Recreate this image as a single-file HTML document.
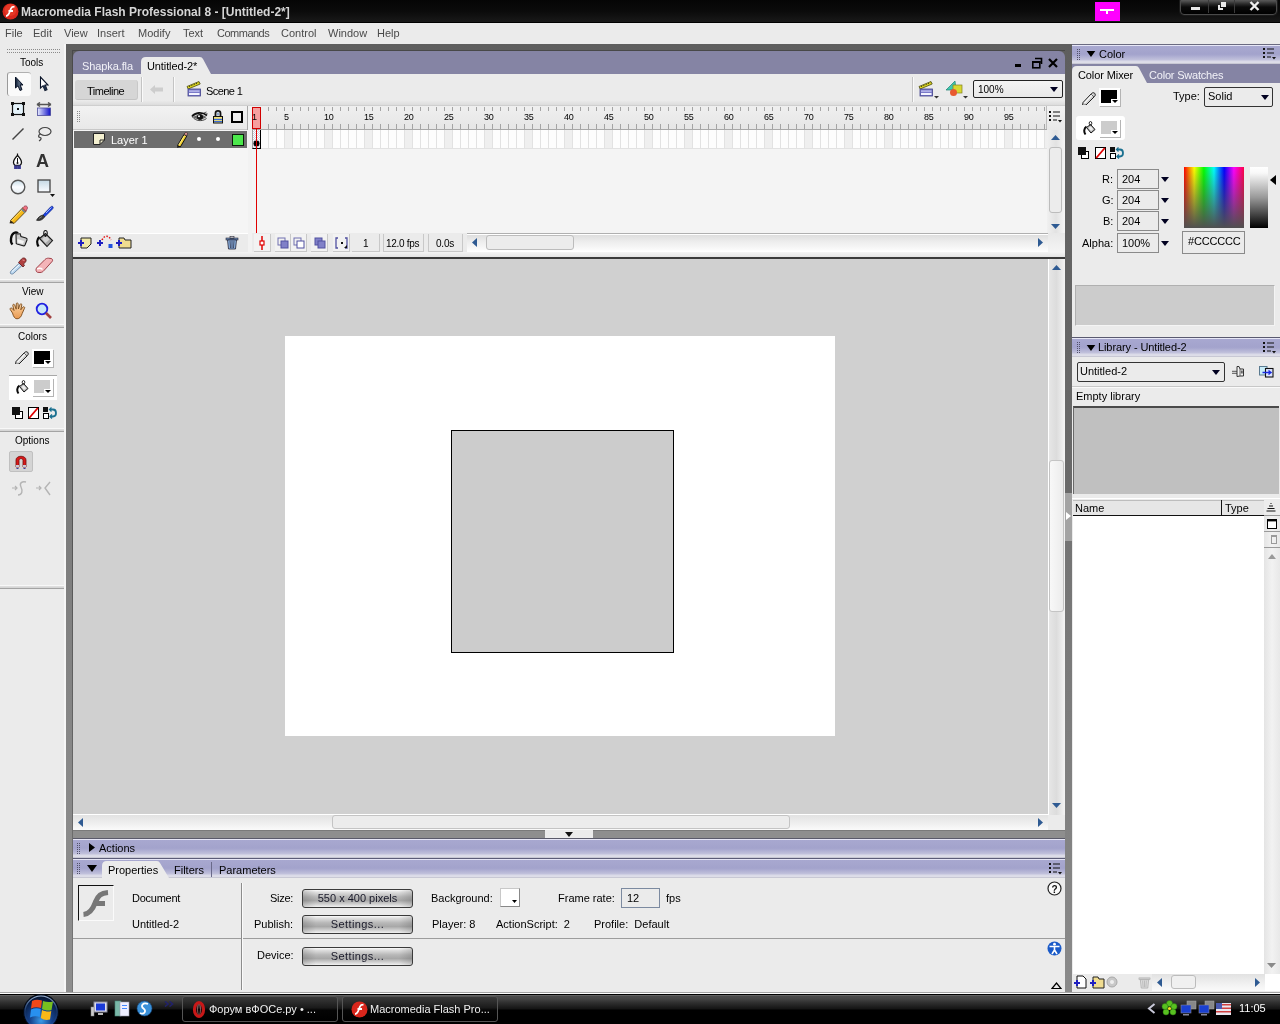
<!DOCTYPE html>
<html><head><meta charset="utf-8">
<style>
*{margin:0;padding:0;box-sizing:border-box}
html,body{width:1280px;height:1024px;overflow:hidden;will-change:transform;background:#ebebeb;font-family:"Liberation Sans",sans-serif;font-size:11px;color:#000}
div,svg{position:absolute}
.t{white-space:nowrap;line-height:1}
.hdr{background:linear-gradient(#e6e6f6 0 1px,#a8a8d0 1px,#a3a3cc 9px,#a6a6ce 10px,#c2c2dc 15px,#dadae8 16px,#dedee8 18px,#c8c8d4 18px)}
.btn{border:1px solid #3a3a3a;border-radius:3px;background:linear-gradient(90deg,rgba(0,0,0,.14),rgba(0,0,0,0) 12%,rgba(0,0,0,0) 88%,rgba(0,0,0,.14)),linear-gradient(#fcfcfc 0,#e0e0e0 12%,#b8b8b8 40%,#a8a8a8 62%,#d4d4d4 85%,#f2f2f2 100%);text-align:center;line-height:15px;color:#1a1a2a}
.fld{border:1px solid #8a8a8a;background:#ebebeb}
</style></head><body>

<!-- ================= TITLE BAR ================= -->
<div style="left:0;top:0;width:1280px;height:23px;background:linear-gradient(#050505 0,#0b0b0b 50%,#1a1a1a 100%)"></div>
<div style="left:0;top:22px;width:1280px;height:1px;background:#000"></div>
<svg style="left:2px;top:3px" width="17" height="17" viewBox="0 0 17 17"><circle cx="8.5" cy="8.5" r="8" fill="#d8261c"/><circle cx="8.5" cy="7" r="6" fill="#f04a30" opacity=".5"/><path d="M4 13 C6 13 7 11 8 8 L9 5.5 C9.6 4 10.5 3.6 12.5 3.6 M6.5 8 L11 8" stroke="#fff" stroke-width="1.8" fill="none"/></svg>
<div class="t" style="left:21px;top:6px;font-size:12px;font-weight:bold;color:#d6d6d6">Macromedia Flash Professional 8 - [Untitled-2*]</div>
<div style="left:1095px;top:2px;width:25px;height:19px;background:#ff00ff"></div>
<div style="left:1100px;top:9px;width:14px;height:2px;background:#fff"></div>
<div style="left:1106px;top:9px;width:2px;height:5px;background:#fff"></div>
<div style="left:1180px;top:-3px;width:97px;height:18px;border:1px solid #4a4a4a;border-radius:4px;background:linear-gradient(#6a6a6a 0,#505050 3px,#2a2a2a 6px,#0a0a0a 9px,#000 100%);box-shadow:0 0 0 1px #1a1a1a"></div>
<div style="left:1208px;top:0;width:1px;height:13px;background:#3a3a3a"></div>
<div style="left:1234px;top:0;width:1px;height:13px;background:#3a3a3a"></div>
<div style="left:1191px;top:7px;width:9px;height:3px;background:#e8e8e8"></div>
<div style="left:1218px;top:5px;width:5px;height:5px;border-left:2px solid #e8e8e8;border-bottom:2px solid #e8e8e8"></div>
<div style="left:1221px;top:2px;width:5px;height:5px;background:#e8e8e8"></div>
<svg style="left:1249px;top:1px" width="11" height="10" viewBox="0 0 11 10"><path d="M1.5 1 L9.5 9 M9.5 1 L1.5 9" stroke="#eee" stroke-width="2.4"/></svg>

<!-- ================= MENU BAR ================= -->
<div style="left:0;top:23px;width:1280px;height:21px;background:#ebebeb"></div>
<div class="t" style="left:5px;top:28px;font-size:11px;color:#4a4a4a;word-spacing:0">File</div>
<div class="t" style="left:33px;top:28px;font-size:11px;color:#4a4a4a">Edit</div>
<div class="t" style="left:64px;top:28px;font-size:11px;color:#4a4a4a">View</div>
<div class="t" style="left:97px;top:28px;font-size:11px;color:#4a4a4a">Insert</div>
<div class="t" style="left:138px;top:28px;font-size:11px;color:#4a4a4a">Modify</div>
<div class="t" style="left:183px;top:28px;font-size:11px;color:#4a4a4a">Text</div>
<div class="t" style="left:217px;top:28px;font-size:11px;color:#4a4a4a;letter-spacing:-.5px">Commands</div>
<div class="t" style="left:281px;top:28px;font-size:11px;color:#4a4a4a">Control</div>
<div class="t" style="left:328px;top:28px;font-size:11px;color:#4a4a4a">Window</div>
<div class="t" style="left:377px;top:28px;font-size:11px;color:#4a4a4a">Help</div>

<!-- ================= TOOLS PANEL ================= -->
<div style="left:0;top:44px;width:66px;height:948px;background:#ebebeb"></div><div style="left:64px;top:44px;width:2px;height:948px;background:#f6f6f6"></div>
<div style="left:7px;top:49px;width:54px;height:4px;background:repeating-linear-gradient(90deg,#8a8a8a 0 1px,transparent 1px 2px);-webkit-mask:linear-gradient(#000 0 1px,transparent 1px 3px,#000 3px 4px)"></div>
<div class="t" style="left:20px;top:58px;font-size:10px;color:#000">Tools</div>
<div style="left:7px;top:72px;width:24px;height:24px;background:#fafafa;border-left:1px solid #9a9a9a;border-top:1px solid #b0b0b0;border-radius:3px"></div>
<svg style="left:14px;top:76px" width="10" height="16" viewBox="0 0 10 16"><defs><linearGradient id="ar" x1="0" y1="0" x2="1" y2="0"><stop offset="0" stop-color="#0a1830"/><stop offset=".5" stop-color="#5a6a80"/><stop offset="1" stop-color="#0a1830"/></linearGradient></defs><path d="M1.5 1 L1.5 12 L4 9.8 L6 14.5 L8 13.6 L6.2 9 L9 9 Z" fill="url(#ar)" stroke="#0a1428" stroke-width="1"/></svg>
<svg style="left:39px;top:76px" width="10" height="16" viewBox="0 0 10 16"><path d="M1.5 1 L1.5 12 L4 9.8 L6 14.5 L8 13.6 L6.2 9 L9 9 Z" fill="#fff" stroke="#0a1428" stroke-width="1.1"/><path d="M3.8 9.8 L5.8 14.5 L8 13.6 L6.2 9Z" fill="#1c2c44"/></svg>
<svg style="left:11px;top:102px" width="14" height="14" viewBox="0 0 14 14"><rect x="1.5" y="1.5" width="11" height="11" fill="#e4f2fa" stroke="#111" stroke-width="1.2"/><rect x="0" y="0" width="3" height="3" fill="#111"/><rect x="11" y="0" width="3" height="3" fill="#111"/><rect x="0" y="11" width="3" height="3" fill="#111"/><rect x="11" y="11" width="3" height="3" fill="#111"/><rect x="6" y="6" width="2" height="2" fill="#111"/></svg>
<svg style="left:36px;top:102px" width="16" height="14" viewBox="0 0 16 14"><path d="M1 2.5 L15 2.5 M1 2.5 L4 0.5 M1 2.5 L4 4.5 M15 2.5 L12 0.5 M15 2.5 L12 4.5" stroke="#555" stroke-width="1.5" fill="none"/><rect x="1.5" y="6" width="13" height="7.5" fill="url(#gt)" stroke="#4a4a9a" stroke-width=".8"/><defs><linearGradient id="gt"><stop offset="0" stop-color="#e8ecff"/><stop offset="1" stop-color="#1010c8"/></linearGradient></defs></svg>
<svg style="left:11px;top:127px" width="14" height="14" viewBox="0 0 14 14"><path d="M1.5 12.5 L12.5 1.5" stroke="#444" stroke-width="1.4"/></svg>
<svg style="left:36px;top:126px" width="16" height="16" viewBox="0 0 16 16"><ellipse cx="9" cy="5.5" rx="6" ry="4" fill="none" stroke="#444" stroke-width="1.2"/><path d="M4.5 8 C2 9 2 11 4 11.5 C6 12 5 14 3 15" fill="none" stroke="#444" stroke-width="1.2"/></svg>
<svg style="left:12px;top:153px" width="11" height="17" viewBox="0 0 11 17"><path d="M5.5 0.5 L5.5 3" stroke="#111" stroke-width="1.2"/><path d="M5.5 2.5 C3.5 4.5 1.5 7 1.5 9.5 C1.5 11 2.5 12 3 12.5 L8 12.5 C8.5 12 9.5 11 9.5 9.5 C9.5 7 7.5 4.5 5.5 2.5Z" fill="#fff" stroke="#111" stroke-width="1.3"/><path d="M5.5 5 L5.5 10" stroke="#111" stroke-width="1"/><circle cx="5.5" cy="10" r="1" fill="#111"/><rect x="2" y="12.5" width="7" height="3.5" fill="#4a4aa0"/><path d="M4 12.5 L4 16 M7 12.5 L7 16" stroke="#2a2a70" stroke-width=".8"/></svg>
<div class="t" style="left:36px;top:152px;font-size:18px;font-weight:bold;color:#333">A</div>
<svg style="left:10px;top:179px" width="16" height="16" viewBox="0 0 16 16"><defs><linearGradient id="og" x1="0" y1="0" x2="0" y2="1"><stop offset="0" stop-color="#c8dde8"/><stop offset=".5" stop-color="#fafcff"/><stop offset="1" stop-color="#e8eef2"/></linearGradient></defs><circle cx="8" cy="8" r="6.8" fill="url(#og)" stroke="#555" stroke-width="1.4"/></svg>
<svg style="left:37px;top:179px" width="19" height="19" viewBox="0 0 19 19"><defs><linearGradient id="rg" x1="0" y1="0" x2="0" y2="1"><stop offset="0" stop-color="#c4d8e4"/><stop offset="1" stop-color="#fafcff"/></linearGradient></defs><rect x="1" y="1" width="12" height="12" fill="url(#rg)" stroke="#444" stroke-width="1.3"/><path d="M13 15 L18 15 L15.5 18 Z" fill="#111"/></svg>
<svg style="left:8px;top:204px" width="20" height="20" viewBox="0 0 20 20"><path d="M2.5 16.5 L14.5 4 L18 7.3 L6 19.5 Z" fill="#f4b818" stroke="#5a4010" stroke-width=".9"/><path d="M3.5 17 L15 5" stroke="#ffe070" stroke-width="1"/><path d="M14.5 4 L16 2.5 C17 1.6 18.3 1.8 19 2.5 C19.7 3.3 19.6 4.6 18.8 5.5 L18 7.3 Z" fill="#f07080" stroke="#803040" stroke-width=".7"/><path d="M13.5 5 L17 8.5" stroke="#6a7a98" stroke-width="1.6"/><path d="M2.5 16.5 L1.5 19.3 L6 19.5 Z" fill="#2a2010"/></svg>
<svg style="left:34px;top:204px" width="20" height="20" viewBox="0 0 20 20"><path d="M9 11 L16.5 3 C17.4 2 18.6 2.1 19 2.8 C19.5 3.5 19.2 4.4 18.3 5.3 L10.8 12.8 Z" fill="#1a40e0" stroke="#0a2080" stroke-width=".6"/><path d="M12 9 L17.5 3.5" stroke="#a8c0ff" stroke-width=".9"/><path d="M9 11 L10.8 12.8 C9 15.5 6 17.3 2.5 16.3 C4 13.5 6 11.5 9 11Z" fill="#3a3a3a" stroke="#111" stroke-width=".6"/><path d="M5 14.5 L8 12.5" stroke="#999" stroke-width=".7"/></svg>
<svg style="left:9px;top:230px" width="20" height="18" viewBox="0 0 20 18"><path d="M3.5 14.5 C1 12 1.5 5 5 3 C6.5 2.2 8 2.5 9 3.5" fill="none" stroke="#0a0a0a" stroke-width="2.3"/><path d="M7 4 L11 3.5 L12 6.5 L17 8 C18 8.3 18.3 9 18 10 L16 15 C15.6 15.8 15 16 14 15.8 L8 14 C7.2 13.7 7 13 7.2 12.3 Z" fill="#c8c8c8" stroke="#1a1a1a" stroke-width="1.1"/><path d="M8.5 9 L15 11 L14 14 L8.5 12.5Z" fill="#f4f4f4"/><path d="M7.5 4.5 L11 4" stroke="#777" stroke-width="1.6"/></svg>
<svg style="left:36px;top:230px" width="18" height="19" viewBox="0 0 18 19"><path d="M2.5 16.5 C0.5 13 1 9 3.5 7" fill="none" stroke="#0a0a0a" stroke-width="2.3"/><path d="M3.5 8.5 L9.5 3.5 L16.5 10.5 L11 16.5 Z" fill="#a8a8a8" stroke="#1a1a1a" stroke-width="1.1"/><path d="M6 9 L10 5.5 L13.5 9.5 L9.5 13 Z" fill="#d4d4d4"/><ellipse cx="9.5" cy="3" rx="1.8" ry="2.5" fill="none" stroke="#1a1a1a" stroke-width="1.1"/><circle cx="9.5" cy="6" r="1" fill="#1a1a1a"/></svg>
<svg style="left:8px;top:256px" width="20" height="20" viewBox="0 0 20 20"><path d="M2.5 17.5 C2 16.5 2.5 15.5 3.5 14.5 L11.5 7 L14 9.5 L6 17 C5 18 4 18.5 2.5 17.5Z" fill="#bcd8f0" stroke="#5a7898" stroke-width=".8"/><path d="M4 15.5 L11 9" stroke="#fff" stroke-width=".9"/><path d="M10.5 6.5 L15 11 L16.5 9.5 L15.5 8 L17.5 6 C18.5 5 18.3 3 17 2.3 C15.8 1.6 14.5 2 13.5 3 L11.8 5 Z" fill="#b04040" stroke="#601a1a" stroke-width=".8"/><path d="M14.5 4 L16.5 4.5" stroke="#e89090" stroke-width="1"/></svg>
<svg style="left:34px;top:257px" width="20" height="17" viewBox="0 0 20 17"><path d="M2.5 11 L11 2.5 C12 1.5 13 1.2 14.5 1.2 L17 1.5 C18.5 1.8 19 3 18.3 4.2 L10 13.5 C9 14.7 7.8 15.5 6 15.5 L3.5 15.3 C2 15 1.5 12.3 2.5 11Z" fill="#f4b4b8" stroke="#a04048" stroke-width="1"/><path d="M3 12 C5 11 7 11 8.5 12.5" fill="none" stroke="#fff" stroke-width="1.3"/></svg>
<div style="left:0;top:279px;width:64px;height:4px;background:linear-gradient(#f8f8f8 0 1px,#e2e2e2 1px,#d2d2d2 3px,#a4a4a4 3px 4px)"></div>
<div class="t" style="left:22px;top:287px;font-size:10px">View</div>
<svg style="left:9px;top:302px" width="18" height="18" viewBox="0 0 18 18"><defs><linearGradient id="hg" x1="0" y1="0" x2="0" y2="1"><stop offset="0" stop-color="#fcd8a8"/><stop offset="1" stop-color="#e89850"/></linearGradient></defs><path d="M3.5 11 L1.2 7.5 C0.6 6.4 2 5.4 2.9 6.2 L5 8.5 L3.8 3.5 C3.5 2.2 5.2 1.8 5.7 3 L7.2 7.2 L7.3 1.8 C7.3 0.6 9.1 0.6 9.1 1.8 L9.4 7 L11 2.5 C11.4 1.3 13.1 1.7 12.8 3 L11.8 7.8 L13.8 5.2 C14.6 4.2 16.2 5 15.5 6.2 L13.2 11.5 C12.3 14.8 10.5 16.8 8 16.8 C5.8 16.8 4.4 14.5 3.5 11Z" fill="url(#hg)" stroke="#7a4a18" stroke-width=".9"/></svg>
<svg style="left:35px;top:302px" width="18" height="18" viewBox="0 0 18 18"><circle cx="7" cy="7" r="5.3" fill="#c8e8f8" stroke="#2020e0" stroke-width="1.8"/><path d="M11 11 L16 16" stroke="#a04040" stroke-width="2.6"/></svg>
<div style="left:0;top:324px;width:64px;height:4px;background:linear-gradient(#f8f8f8 0 1px,#e2e2e2 1px,#d2d2d2 3px,#a4a4a4 3px 4px)"></div>
<div class="t" style="left:18px;top:332px;font-size:10px">Colors</div>
<svg style="left:15px;top:350px" width="14" height="14" viewBox="0 0 14 14"><path d="M1 11.5 L9.5 2.5 C10.5 1.5 12 1.5 12.7 2.3 C13.5 3.1 13.5 4.5 12.5 5.5 L4 14 L0.5 14.5 Z" fill="#d0d0d0" stroke="#222" stroke-width="1"/><path d="M2.5 12 L10.5 3.5" stroke="#fafafa" stroke-width="1.2"/><path d="M9 3 L12 6" stroke="#444" stroke-width=".8"/></svg>
<svg style="left:32px;top:349px" width="22" height="19" viewBox="0 0 22 19" shape-rendering="crispEdges"><rect x="0" y="0" width="21" height="18" fill="#fff"/><rect x="21" y="1" width="1" height="18" fill="#b4b4b4"/><rect x="1" y="18" width="21" height="1" fill="#b4b4b4"/><rect x="2" y="2" width="16" height="13" fill="#000"/><rect x="12" y="11" width="7" height="5" fill="#fff"/><path d="M13 12 L19 12 L16 15Z" fill="#000" shape-rendering="auto"/></svg>
<div style="left:9px;top:375px;width:48px;height:25px;background:#fff;border-top:1px solid #a8a8a8"></div>
<svg style="left:16px;top:380px" width="13" height="15" viewBox="0 0 13 15"><path d="M2.5 13.5 C0.5 11 1 7 3.5 5.5" fill="none" stroke="#0a0a0a" stroke-width="2"/><path d="M3.5 6.5 L7.5 3.5 L12 8.5 L8 12 Z" fill="#b8b8b8" stroke="#111" stroke-width="1"/><path d="M5.5 7 L7.8 5.2 L10.2 8 L8 10Z" fill="#eee"/><ellipse cx="7.5" cy="2.3" rx="1.3" ry="1.8" fill="none" stroke="#111" stroke-width=".9"/></svg>
<svg style="left:32px;top:378px" width="22" height="19" viewBox="0 0 22 19" shape-rendering="crispEdges"><rect x="0" y="0" width="21" height="18" fill="#fff"/><rect x="21" y="1" width="1" height="18" fill="#b4b4b4"/><rect x="1" y="18" width="21" height="1" fill="#b4b4b4"/><rect x="2" y="2" width="16" height="13" fill="#cccccc"/><rect x="12" y="11" width="7" height="5" fill="#fff"/><path d="M13 12 L19 12 L16 15Z" fill="#000" shape-rendering="auto"/></svg>
<svg style="left:12px;top:407px" width="11" height="12" viewBox="0 0 11 12" shape-rendering="crispEdges"><rect x="3" y="4" width="8" height="8" fill="#000"/><rect x="4" y="5" width="6" height="6" fill="#fff"/><rect x="0" y="0" width="8" height="8" fill="#111"/></svg>
<svg style="left:28px;top:407px" width="11" height="12" viewBox="0 0 11 12"><rect x="0.5" y="0.5" width="10" height="11" fill="#fff" stroke="#000" stroke-width="1" shape-rendering="crispEdges"/><path d="M1.2 11 L9.8 1" stroke="#e00000" stroke-width="1.8"/></svg>
<svg style="left:43px;top:407px" width="14" height="12" viewBox="0 0 14 12"><rect x="0" y="0" width="5" height="5" fill="#111" shape-rendering="crispEdges"/><rect x="0.5" y="6.5" width="5" height="5" fill="#fff" stroke="#000" stroke-width="1" shape-rendering="crispEdges"/><path d="M7 2.5 L10 2.5 C12.5 2.5 13 4.5 13 6 C13 8 12 9.5 10 9.5 L7.5 9.5" fill="none" stroke="#1a7090" stroke-width="1.8"/><path d="M8.5 0.5 L6.5 2.5 L8.5 4.5 M9 7.5 L7 9.5 L9 11.5" fill="none" stroke="#1a7090" stroke-width="1.3"/></svg>
<div style="left:0;top:428px;width:64px;height:4px;background:linear-gradient(#f8f8f8 0 1px,#e2e2e2 1px,#d2d2d2 3px,#a4a4a4 3px 4px)"></div>
<div class="t" style="left:15px;top:436px;font-size:10px">Options</div>
<div style="left:9px;top:451px;width:24px;height:21px;background:#d4d4d4;border:1px solid #c0c0c0;border-radius:2px"></div>
<svg style="left:13px;top:453px" width="16" height="17" viewBox="0 0 16 17"><path d="M3 14 L3 7 C3 2 13 2 13 7 L13 14 L10 14 L10 7.5 C10 5 6 5 6 7.5 L6 14 Z" fill="#d81818" stroke="#701010" stroke-width=".8"/><rect x="3" y="12" width="3" height="2" fill="#c8c8d8"/><rect x="10" y="12" width="3" height="2" fill="#c8c8d8"/><path d="M3.5 15.5 L5.5 15.5 M10.5 15.5 L12.5 15.5" stroke="#3a3aa0"/></svg>
<svg style="left:11px;top:480px" width="18" height="17" viewBox="0 0 18 17"><path d="M1 8 L6 8 M4 6 L6 8 L4 10" fill="none" stroke="#b4b4b4" stroke-width="1.2"/><path d="M15 2 C11 1 8 3 10 7 C12 11 11 15 7 15" fill="none" stroke="#b4b4b4" stroke-width="1.4"/></svg>
<svg style="left:35px;top:480px" width="18" height="17" viewBox="0 0 18 17"><path d="M1 8 L6 8 M4 6 L6 8 L4 10" fill="none" stroke="#b4b4b4" stroke-width="1.2"/><path d="M15 2 L10 8 L15 15" fill="none" stroke="#b4b4b4" stroke-width="1.4"/></svg>
<div style="left:0;top:585px;width:64px;height:4px;background:linear-gradient(#f8f8f8 0 1px,#e2e2e2 1px,#d2d2d2 3px,#a4a4a4 3px 4px)"></div>


<!-- ================= DOC WINDOW ================= -->
<div style="left:66px;top:44px;width:1007px;height:948px;background:linear-gradient(#5e5e5e 0,#6a6a6a 25%,#7c7c7c 50%,#8a8a8a 80%,#8e8e8e 100%)"></div><div style="left:72px;top:51px;width:1px;height:941px;background:linear-gradient(#4a4a4a,#555 50%,#777)"></div><div style="left:72px;top:50px;width:993px;height:1px;background:#484848"></div>
<div style="left:73px;top:51px;width:992px;height:23px;background:#8584a4;border-radius:6px 6px 0 0"></div>
<div class="t" style="left:82px;top:61px;font-size:11px;color:#f2f2f8;letter-spacing:-.1px">Shapka.fla</div>
<svg style="left:139px;top:57px" width="75" height="17" viewBox="0 0 75 17"><path d="M2 17 L2 5 Q2 0 7 0 L61 0 Q63 0 64 2 L72 17 Z" fill="#ebebeb"/></svg>
<div class="t" style="left:147px;top:61px;font-size:11px;color:#000;letter-spacing:-.1px">Untitled-2*</div>
<div style="left:1015px;top:64px;width:6px;height:3px;background:#000"></div>
<svg style="left:1031px;top:57px" width="12" height="12" viewBox="0 0 12 12"><path d="M4 1.5 L10.5 1.5 L10.5 7" fill="none" stroke="#000" stroke-width="1.6"/><rect x="1.8" y="4.8" width="7" height="6" fill="none" stroke="#000" stroke-width="1.6"/><rect x="1" y="4" width="8.6" height="2" fill="#000"/></svg>
<svg style="left:1048px;top:58px" width="10" height="10" viewBox="0 0 10 10"><path d="M1 1 L9 9 M9 1 L1 9" stroke="#000" stroke-width="2.2"/></svg>
<!-- toolbar -->
<div style="left:73px;top:74px;width:992px;height:31px;background:linear-gradient(#ebebeb 0,#ebebeb 85%,#dcdcdc 100%)"></div>
<div style="left:75px;top:80px;width:63px;height:20px;background:#d6d6d6;border-radius:3px;border-bottom:1px solid #c4c4c4;border-right:1px solid #c8c8c8"></div>
<div class="t" style="left:87px;top:86px;font-size:11px;letter-spacing:-.5px">Timeline</div>
<div style="left:141px;top:77px;width:2px;height:25px;background:linear-gradient(90deg,#c4c4c4 1px,#fafafa 1px)"></div>
<svg style="left:149px;top:84px" width="15" height="11" viewBox="0 0 15 11"><path d="M1 5.5 L6 1 L6 3.5 L14 3.5 L14 7.5 L6 7.5 L6 10 Z" fill="#cdcdcd"/></svg>
<div style="left:173px;top:77px;width:2px;height:25px;background:linear-gradient(90deg,#c4c4c4 1px,#fafafa 1px)"></div>
<svg style="left:186px;top:80px" width="17" height="17" viewBox="0 0 17 17"><path d="M1 6.5 L13 1.5 L14.2 4 L2.2 9 Z" fill="#e0d820" stroke="#4a4a10" stroke-width=".8"/><path d="M3 6.6 L12.5 2.8" stroke="#3a3a10" stroke-width="1" stroke-dasharray="1.2 1.3"/><rect x="2" y="9" width="12.5" height="7" fill="#7a7ac8" stroke="#40408a" stroke-width=".8"/><rect x="3" y="10.5" width="10.5" height="1.2" fill="#dcdcff" opacity=".8"/><rect x="3" y="13" width="10.5" height="2" fill="#f4f4ff"/></svg>
<div class="t" style="left:206px;top:86px;font-size:11px;letter-spacing:-.6px">Scene 1</div>
<div style="left:912px;top:77px;width:2px;height:25px;background:linear-gradient(90deg,#c4c4c4 1px,#fafafa 1px)"></div>
<svg style="left:918px;top:80px" width="22" height="19" viewBox="0 0 22 19"><path d="M1 6.5 L13 1.5 L14.2 4 L2.2 9 Z" fill="#e0d820" stroke="#4a4a10" stroke-width=".8"/><path d="M3 6.6 L12.5 2.8" stroke="#3a3a10" stroke-width="1" stroke-dasharray="1.2 1.3"/><rect x="2" y="9" width="12.5" height="7" fill="#7a7ac8" stroke="#40408a" stroke-width=".8"/><rect x="3" y="10.5" width="10.5" height="1.2" fill="#dcdcff" opacity=".8"/><rect x="3" y="13" width="10.5" height="2" fill="#f4f4ff"/><path d="M16 16 L21 16 L18.5 18.5Z" fill="#333"/></svg>
<svg style="left:945px;top:80px" width="24" height="19" viewBox="0 0 24 19"><path d="M1 10 L10 1 L11 10 Z" fill="#40c8b0" stroke="#208070" stroke-width=".7"/><rect x="8" y="5" width="9" height="8" fill="#d8d830" stroke="#808020" stroke-width=".7"/><circle cx="8.5" cy="12.5" r="3.5" fill="#e85a30"/><path d="M18 16 L23 16 L20.5 18.5Z" fill="#333"/></svg>
<div style="left:973px;top:80px;width:90px;height:18px;border:1px solid #222;border-radius:2px;background:linear-gradient(#f4f4f4,#e8e8e8)"></div>
<div class="t" style="left:978px;top:85px;font-size:10px">100%</div>
<svg style="left:1050px;top:87px" width="8" height="5" viewBox="0 0 8 5"><path d="M0 0 L8 0 L4 5Z" fill="#000020"/></svg>
<!-- timeline header -->
<div style="left:73px;top:105px;width:992px;height:1px;background:#cfcfcf"></div>
<div style="left:73px;top:106px;width:992px;height:24px;background:linear-gradient(#f2f2f2,#e8e8e8)"></div>
<div style="left:73px;top:129px;width:175px;height:1px;background:#c8c8c8"></div>
<div style="left:77px;top:111px;width:4px;height:12px;background:repeating-linear-gradient(#8a8a8a 0 1px,transparent 1px 2px);-webkit-mask:linear-gradient(90deg,#000 0 1px,transparent 1px 2px,#000 2px 3px,transparent 3px)"></div>
<svg style="left:191px;top:111px" width="17" height="12" viewBox="0 0 17 12"><path d="M1 5.5 C4 1.5 11 0.5 16 4.5" fill="none" stroke="#111" stroke-width="1.8"/><path d="M1.5 6 C4.5 10 11 11 15.5 7.5" fill="none" stroke="#444" stroke-width="1"/><path d="M2 6 C5 3.5 12 3 15.5 6 C12 9 5 9 2 6Z" fill="#666"/><circle cx="9" cy="6" r="3" fill="#111"/><circle cx="8" cy="5.2" r="1" fill="#fff"/><path d="M13 2 L15.5 1 M14.5 3.2 L16.5 2.6" stroke="#222" stroke-width=".7"/></svg>
<svg style="left:212px;top:109px" width="12" height="15" viewBox="0 0 12 15"><path d="M3.5 8 L3.5 4.2 C3.5 1.2 8.5 1.2 8.5 4.2 L8.5 8" fill="none" stroke="#111" stroke-width="1.8"/><rect x="1.5" y="7.5" width="9" height="6.5" fill="#f0e078" stroke="#111" stroke-width="1"/><rect x="2" y="9.8" width="8" height="1.3" fill="#3a6ad8"/><rect x="2" y="12" width="8" height="1.2" fill="#3a6ad8"/><rect x="5.3" y="3.5" width="1.4" height="3" fill="#6a8ab8"/></svg>
<div style="left:231px;top:111px;width:12px;height:12px;border:2px solid #000"></div>
<!-- ruler -->
<div style="left:247px;top:106px;width:5px;height:146px;background:linear-gradient(90deg,#a8a8a8 0 1px,#f2f2f2 1px)"></div>
<div style="left:252px;top:106px;width:795px;height:23px;background:linear-gradient(#efefef,#e6e6e6);border-right:1px solid #bdbdbd"></div>
<div style="left:252px;top:107px;width:795px;height:4px;background:repeating-linear-gradient(90deg,#a4a4a4 0 1px,transparent 1px 8px)"></div>
<div style="left:252px;top:124px;width:795px;height:5px;background:repeating-linear-gradient(90deg,#a4a4a4 0 1px,transparent 1px 8px)"></div>
<div style="left:252px;top:129px;width:795px;height:1px;background:#a8a8a8"></div>

<div class="t" style="left:284px;top:113px;font-size:9px;letter-spacing:-.2px">5</div>
<div class="t" style="left:324px;top:113px;font-size:9px;letter-spacing:-.2px">10</div>
<div class="t" style="left:364px;top:113px;font-size:9px;letter-spacing:-.2px">15</div>
<div class="t" style="left:404px;top:113px;font-size:9px;letter-spacing:-.2px">20</div>
<div class="t" style="left:444px;top:113px;font-size:9px;letter-spacing:-.2px">25</div>
<div class="t" style="left:484px;top:113px;font-size:9px;letter-spacing:-.2px">30</div>
<div class="t" style="left:524px;top:113px;font-size:9px;letter-spacing:-.2px">35</div>
<div class="t" style="left:564px;top:113px;font-size:9px;letter-spacing:-.2px">40</div>
<div class="t" style="left:604px;top:113px;font-size:9px;letter-spacing:-.2px">45</div>
<div class="t" style="left:644px;top:113px;font-size:9px;letter-spacing:-.2px">50</div>
<div class="t" style="left:684px;top:113px;font-size:9px;letter-spacing:-.2px">55</div>
<div class="t" style="left:724px;top:113px;font-size:9px;letter-spacing:-.2px">60</div>
<div class="t" style="left:764px;top:113px;font-size:9px;letter-spacing:-.2px">65</div>
<div class="t" style="left:804px;top:113px;font-size:9px;letter-spacing:-.2px">70</div>
<div class="t" style="left:844px;top:113px;font-size:9px;letter-spacing:-.2px">75</div>
<div class="t" style="left:884px;top:113px;font-size:9px;letter-spacing:-.2px">80</div>
<div class="t" style="left:924px;top:113px;font-size:9px;letter-spacing:-.2px">85</div>
<div class="t" style="left:964px;top:113px;font-size:9px;letter-spacing:-.2px">90</div>
<div class="t" style="left:1004px;top:113px;font-size:9px;letter-spacing:-.2px">95</div>
<svg style="left:1048px;top:110px" width="15" height="13" viewBox="0 0 15 13"><rect x="1" y="1" width="2" height="2" fill="#111"/><rect x="1" y="5" width="2" height="2" fill="#111"/><rect x="1" y="9" width="2" height="2" fill="#111"/><rect x="5" y="1.5" width="7" height="1" fill="#111"/><rect x="5" y="5.5" width="7" height="1" fill="#111"/><rect x="5" y="9.5" width="4" height="1" fill="#111"/><path d="M10 10 L14 10 L12 12.5Z" fill="#111"/></svg>
<!-- layer area -->
<div style="left:73px;top:130px;width:175px;height:103px;background:#f5f5f5"></div>
<div style="left:74px;top:131px;width:173px;height:17px;background:#6d6d6d"></div>
<svg style="left:92px;top:132px" width="14" height="14" viewBox="0 0 14 14"><path d="M1.5 1.5 L12.5 1.5 L12.5 8 L8 12.5 L1.5 12.5 Z" fill="#f4f0d0" stroke="#222" stroke-width="1"/><path d="M12.5 8 L8 8 L8 12.5" fill="none" stroke="#222" stroke-width="1"/></svg>
<div class="t" style="left:111px;top:135px;font-size:11px;color:#fff">Layer 1</div>
<svg style="left:176px;top:132px" width="12" height="16" viewBox="0 0 12 16"><path d="M1.5 13.5 L8 2.5 L10.8 4 L4.3 15 Z" fill="#f4d030" stroke="#111" stroke-width="1"/><path d="M2.8 13 L8.5 3.5" stroke="#fff8a0" stroke-width=".8"/><path d="M8 2.5 L9 0.8 C9.4 0.2 10.4 0 11 0.5 C11.6 1 11.6 1.8 11.3 2.4 L10.8 4 Z" fill="#d89090" stroke="#222" stroke-width=".7"/><path d="M1.5 13.5 L1 15.8 L4.3 15 Z" fill="#111"/></svg>
<div style="left:197px;top:137px;width:4px;height:4px;background:#fff;border-radius:50%"></div>
<div style="left:216px;top:137px;width:4px;height:4px;background:#fff;border-radius:50%"></div>
<div style="left:232px;top:134px;width:12px;height:12px;background:#4ce84c;border:1px solid #0a1a0a"></div>
<!-- frames -->
<div style="left:252px;top:130px;width:795px;height:103px;background:#f4f4f4"></div>
<div style="left:252px;top:130px;width:795px;height:18px;background:repeating-linear-gradient(90deg,#e2e2e2 0 1px,#fdfdfd 1px 8px)"></div>
<div style="left:284px;top:130px;width:763px;height:18px;background:repeating-linear-gradient(90deg,#e2e2e2 0 1px,#efefef 1px 8px,transparent 8px 40px)"></div>
<div style="left:252px;top:148px;width:795px;height:1px;background:#e2e2e2"></div>
<div style="left:252px;top:130px;width:9px;height:19px;border-left:1px solid #a0a0a0;border-right:1px solid #000;border-bottom:1px solid #000;background:repeating-conic-gradient(#d0d0dc 0 25%,#fff 0 50%) 0 0/2px 2px"></div>
<div style="left:254px;top:141px;width:5px;height:5px;background:#000;border-radius:50%;box-shadow:0 0 0 .5px #000"></div>
<div style="left:252px;top:107px;width:9px;height:22px;background:#f6a0a0;border:1px solid #d00000"></div>
<div class="t" style="left:252px;top:113px;font-size:9px">1</div>
<div style="left:256px;top:129px;width:1px;height:104px;background:#e00000"></div>
<!-- timeline vscroll -->
<div style="left:1047px;top:130px;width:18px;height:103px;background:linear-gradient(90deg,#f0f0f0,#e2e2e2 50%,#f6f6f6)"></div>
<svg style="left:1051px;top:135px" width="9" height="5" viewBox="0 0 9 5"><path d="M0 5 L9 5 L4.5 0Z" fill="#2e5a92"/></svg>
<div style="left:1049px;top:147px;width:13px;height:66px;border:1px solid #bcbcbc;border-radius:3px;background:#ececec"></div>
<svg style="left:1051px;top:224px" width="9" height="5" viewBox="0 0 9 5"><path d="M0 0 L9 0 L4.5 5Z" fill="#2e5a92"/></svg>
<!-- timeline bottom bar -->
<div style="left:73px;top:233px;width:175px;height:19px;background:#ebebeb;border-top:1px solid #fff"></div>
<div style="left:73px;top:252px;width:992px;height:5px;background:linear-gradient(#f4f4f4,#e4e4e4)"></div>
<svg style="left:77px;top:236px" width="16" height="13" viewBox="0 0 16 13"><path d="M4 2 L14 2 L14 8 L10 12 L4 12Z" fill="#f0e8a8" stroke="#222" stroke-width="1"/><path d="M1 7 L7 7 M4 4 L4 10" stroke="#2020c0" stroke-width="2"/></svg>
<svg style="left:96px;top:235px" width="18" height="14" viewBox="0 0 18 14"><path d="M1 8 L7 8 M4 5 L4 11" stroke="#2020c0" stroke-width="2"/><path d="M6 5 C8 0 13 0 15 5" fill="none" stroke="#e01010" stroke-width="1.5" stroke-dasharray="1.5 1.5"/><rect x="12.5" y="9" width="4" height="4" fill="#2050e0"/></svg>
<svg style="left:115px;top:235px" width="18" height="14" viewBox="0 0 18 14"><path d="M4 3 L9 3 L10 5 L16 5 L16 13 L4 13Z" fill="#f0dc90" stroke="#222" stroke-width="1"/><path d="M1 8 L7 8 M4 5 L4 11" stroke="#2020c0" stroke-width="2"/></svg>
<svg style="left:225px;top:236px" width="14" height="14" viewBox="0 0 14 14"><rect x="1" y="2" width="12" height="2" fill="#6a8ab8" stroke="#223" stroke-width=".6"/><path d="M2.5 4 L3.5 13 L10.5 13 L11.5 4 Z" fill="#8ab0e0" stroke="#223" stroke-width=".8"/><path d="M5 5 L5.5 12 M7 5 L7 12 M9 5 L8.5 12" stroke="#223" stroke-width=".7"/><rect x="5" y="0.5" width="4" height="2" fill="none" stroke="#223" stroke-width=".6"/></svg>
<div style="left:252px;top:233px;width:215px;height:19px;background:#ebebeb"></div>
<div style="left:254px;top:234px;width:17px;height:18px;border-right:1px solid #c8c8c8;border-bottom:1px solid #c8c8c8;background:#f2f2f2"></div>
<svg style="left:258px;top:236px" width="8" height="14" viewBox="0 0 8 14"><path d="M4 0 L4 14" stroke="#e00000" stroke-width="1.5"/><rect x="2" y="5" width="4" height="4" fill="#fff" stroke="#e00000" stroke-width="1.2"/></svg>
<div style="left:275px;top:234px;width:16px;height:18px;border-right:1px solid #c8c8c8;border-bottom:1px solid #c8c8c8;background:#f2f2f2"></div>
<svg style="left:277px;top:237px" width="12" height="12" viewBox="0 0 12 12"><rect x="1" y="1" width="7" height="7" fill="none" stroke="#7070b0"/><rect x="4" y="4" width="7" height="7" fill="#8080c8" stroke="#5050a0"/></svg>
<div style="left:291px;top:234px;width:16px;height:18px;border-right:1px solid #c8c8c8;border-bottom:1px solid #c8c8c8;background:#f2f2f2"></div>
<svg style="left:293px;top:237px" width="12" height="12" viewBox="0 0 12 12"><rect x="1" y="1" width="7" height="7" fill="none" stroke="#7070b0"/><rect x="4" y="4" width="7" height="7" fill="#fff" stroke="#5050a0"/></svg>
<div style="left:311px;top:234px;width:17px;height:18px;border-right:1px solid #c8c8c8;border-bottom:1px solid #c8c8c8;background:#f2f2f2"></div>
<svg style="left:314px;top:237px" width="12" height="12" viewBox="0 0 12 12"><rect x="1" y="1" width="7" height="7" fill="#8080c8" stroke="#5050a0"/><rect x="4" y="4" width="7" height="7" fill="#8080c8" stroke="#5050a0"/></svg>
<div style="left:333px;top:234px;width:17px;height:18px;border-right:1px solid #c8c8c8;border-bottom:1px solid #c8c8c8;background:#f2f2f2"></div>
<svg style="left:335px;top:237px" width="13" height="12" viewBox="0 0 13 12"><path d="M3 1 L1 1 L1 11 L3 11 M10 1 L12 1 L12 11 L10 11" fill="none" stroke="#5050a0" stroke-width="1.3"/><rect x="6" y="5" width="2" height="2" fill="#111"/><path d="M12 8 L12 11 L9 11Z" fill="#111"/></svg>
<div style="left:352px;top:234px;width:28px;height:18px;border-right:1px solid #c8c8c8;border-bottom:1px solid #c8c8c8;background:#ebebeb"></div>
<div class="t" style="left:363px;top:239px;font-size:10px">1</div>
<div style="left:383px;top:234px;width:41px;height:18px;border-right:1px solid #c8c8c8;border-bottom:1px solid #c8c8c8;border-left:1px solid #c8c8c8;background:#ebebeb"></div>
<div class="t" style="left:386px;top:239px;font-size:10px;letter-spacing:-.3px">12.0 fps</div>
<div style="left:428px;top:234px;width:35px;height:18px;border-right:1px solid #c8c8c8;border-bottom:1px solid #c8c8c8;border-left:1px solid #c8c8c8;background:#ebebeb"></div>
<div class="t" style="left:436px;top:239px;font-size:10px;letter-spacing:-.2px">0.0s</div>
<div style="left:467px;top:233px;width:581px;height:1px;background:#b0b0b0"></div><div style="left:1048px;top:233px;width:17px;height:19px;background:linear-gradient(#e8e8e8,#f4f4f4)"></div><div style="left:467px;top:234px;width:581px;height:18px;background:linear-gradient(#fff 0 1px,#dedede 1px,#ececec 40%,#f8f8f8 80%,#ffffff)"></div>
<svg style="left:472px;top:238px" width="5" height="9" viewBox="0 0 5 9"><path d="M5 0 L5 9 L0 4.5Z" fill="#2e5a92"/></svg>
<div style="left:486px;top:235px;width:88px;height:15px;border:1px solid #bcbcbc;border-radius:3px;background:#ececec"></div>
<svg style="left:1038px;top:238px" width="5" height="9" viewBox="0 0 5 9"><path d="M0 0 L0 9 L5 4.5Z" fill="#2e5a92"/></svg>
<div style="left:73px;top:257px;width:992px;height:2px;background:#3a3a3a"></div>
<!-- stage -->
<div style="left:73px;top:259px;width:975px;height:555px;background:#d0d0d0"></div>
<div style="left:285px;top:336px;width:550px;height:400px;background:#fff"></div>
<div style="left:451px;top:430px;width:223px;height:223px;background:#cccccc;border:1px solid #000"></div>
<div style="left:1048px;top:259px;width:17px;height:556px;background:linear-gradient(90deg,#fff 0 1px,#e6e6e6 1px,#dcdcdc 50%,#f4f4f4)"></div>
<svg style="left:1052px;top:265px" width="9" height="5" viewBox="0 0 9 5"><path d="M0 5 L9 5 L4.5 0Z" fill="#2e5a92"/></svg>
<div style="left:1049px;top:460px;width:15px;height:152px;border:1px solid #c4c4c4;border-radius:3px;background:linear-gradient(90deg,#f8f8f8,#ececec)"></div>
<svg style="left:1052px;top:803px" width="9" height="5" viewBox="0 0 9 5"><path d="M0 0 L9 0 L4.5 5Z" fill="#2e5a92"/></svg>
<div style="left:73px;top:814px;width:975px;height:1px;background:#fff"></div>
<div style="left:73px;top:815px;width:975px;height:15px;background:linear-gradient(#e2e2e2,#f0f0f0 60%,#fafafa)"></div>
<svg style="left:78px;top:818px" width="5" height="9" viewBox="0 0 5 9"><path d="M5 0 L5 9 L0 4.5Z" fill="#2e5a92"/></svg>
<div style="left:332px;top:815px;width:458px;height:14px;border:1px solid #c4c4c4;border-radius:3px;background:#ececec"></div>
<svg style="left:1038px;top:818px" width="5" height="9" viewBox="0 0 5 9"><path d="M0 0 L0 9 L5 4.5Z" fill="#2e5a92"/></svg>
<div style="left:1048px;top:815px;width:17px;height:15px;background:#ebebeb"></div>
<div style="left:73px;top:830px;width:992px;height:9px;background:#8e8e8e;border-top:1px solid #7a7a7a;border-bottom:1px solid #5a5a6a"></div>
<div style="left:545px;top:830px;width:48px;height:8px;background:#ebebeb"></div>
<svg style="left:565px;top:832px" width="8" height="5" viewBox="0 0 8 5"><path d="M0 0 L8 0 L4 5Z" fill="#111"/></svg>


<!-- ================= BOTTOM PANELS ================= -->
<div class="hdr" style="left:73px;top:839px;width:992px;height:19px"></div>
<div style="left:77px;top:843px;width:4px;height:11px;background:repeating-linear-gradient(#50506a 0 1px,transparent 1px 2px);-webkit-mask:linear-gradient(90deg,#000 0 1px,transparent 1px 2px,#000 2px 3px,transparent 3px)"></div>
<svg style="left:89px;top:843px" width="6" height="9" viewBox="0 0 6 9"><path d="M0 0 L6 4.5 L0 9Z" fill="#000"/></svg>
<div class="t" style="left:99px;top:843px;font-size:11px">Actions</div>
<div style="left:73px;top:858px;width:992px;height:1px;background:#5c5c78"></div>
<div class="hdr" style="left:73px;top:859px;width:992px;height:19px"></div>
<div style="left:77px;top:863px;width:4px;height:11px;background:repeating-linear-gradient(#50506a 0 1px,transparent 1px 2px);-webkit-mask:linear-gradient(90deg,#000 0 1px,transparent 1px 2px,#000 2px 3px,transparent 3px)"></div>
<svg style="left:87px;top:865px" width="10" height="7" viewBox="0 0 10 7"><path d="M0 0 L10 0 L5 7Z" fill="#000"/></svg>
<svg style="left:101px;top:861px" width="70" height="17" viewBox="0 0 70 17"><path d="M1 17 L1 5 Q1 0 6 0 L56 0 Q58 0 59 2 L68 17 Z" fill="#ebebeb"/></svg>
<div class="t" style="left:108px;top:865px;font-size:11px">Properties</div>
<div class="t" style="left:174px;top:865px;font-size:11px">Filters</div>
<div style="left:211px;top:862px;width:1px;height:15px;background:#6a6a8a"></div>
<div class="t" style="left:219px;top:865px;font-size:11px">Parameters</div>
<svg style="left:1048px;top:862px" width="15" height="13" viewBox="0 0 15 13"><rect x="1" y="1" width="2" height="2" fill="#111"/><rect x="1" y="5" width="2" height="2" fill="#111"/><rect x="1" y="9" width="2" height="2" fill="#111"/><rect x="5" y="1.5" width="7" height="1" fill="#111"/><rect x="5" y="5.5" width="7" height="1" fill="#111"/><rect x="5" y="9.5" width="4" height="1" fill="#111"/><path d="M10 10 L14 10 L12 12.5Z" fill="#111"/></svg>
<div style="left:73px;top:878px;width:992px;height:114px;background:#ebebeb"></div>
<div style="left:78px;top:885px;width:36px;height:36px;background:#ebebeb;border-left:1.5px solid #111;border-top:1.5px solid #111;border-right:1px solid #fafafa;border-bottom:1px solid #fafafa"></div>
<svg style="left:80px;top:887px" width="32" height="32" viewBox="0 0 32 32"><path d="M3.5 27.5 C10 27 13 22 15.5 15 C18 8.5 21 6 28 5.5" fill="none" stroke="#777" stroke-width="5.2"/><path d="M14 16.5 L25 16.5" stroke="#777" stroke-width="5"/></svg>
<div class="t" style="left:132px;top:893px;font-size:11px;letter-spacing:-.25px">Document</div>
<div class="t" style="left:132px;top:919px;font-size:11px">Untitled-2</div>
<div style="left:241px;top:883px;width:2px;height:107px;background:linear-gradient(90deg,#8c8c8c 1px,#fafafa 1px)"></div>
<div style="left:73px;top:938px;width:168px;height:1px;background:#9c9c9c"></div>
<div style="left:243px;top:938px;width:822px;height:1px;background:#9c9c9c"></div>
<div class="t" style="left:270px;top:893px;font-size:11px;letter-spacing:-.3px">Size:</div>
<div class="t" style="left:254px;top:919px;font-size:11px">Publish:</div>
<div class="t" style="left:257px;top:950px;font-size:11px">Device:</div>
<div class="btn t" style="left:302px;top:889px;width:111px;height:19px;font-size:11px;line-height:17px">550 x 400 pixels</div>
<div class="btn t" style="left:302px;top:915px;width:111px;height:19px;font-size:11px;line-height:17px"><span style="letter-spacing:.4px">Settings...</span></div>
<div class="btn t" style="left:302px;top:947px;width:111px;height:19px;font-size:11px;line-height:17px"><span style="letter-spacing:.4px">Settings...</span></div>
<div class="t" style="left:431px;top:893px;font-size:11px">Background:</div>
<div style="left:500px;top:888px;width:20px;height:19px;background:#fff;border:1px solid #c8c8c8;border-right-color:#888;border-bottom-color:#888"></div>
<svg style="left:512px;top:900px" width="5" height="3" viewBox="0 0 5 3"><path d="M0 0 L5 0 L2.5 3Z" fill="#000"/></svg>
<div class="t" style="left:558px;top:893px;font-size:11px">Frame rate:</div>
<div class="fld" style="left:621px;top:888px;width:39px;height:20px;border-color:#7c8aa0"></div>
<div class="t" style="left:627px;top:893px;font-size:11px">12</div>
<div class="t" style="left:666px;top:893px;font-size:11px">fps</div>
<div class="t" style="left:432px;top:919px;font-size:11px">Player: 8</div>
<div class="t" style="left:496px;top:919px;font-size:11px">ActionScript: &nbsp;2</div>
<div class="t" style="left:594px;top:919px;font-size:11px">Profile: &nbsp;Default</div>
<svg style="left:1046px;top:880px" width="17" height="17" viewBox="0 0 17 17"><circle cx="8.5" cy="8.5" r="6.5" fill="#fafafa" stroke="#222" stroke-width="1.2"/><text x="8.5" y="12.5" font-family="Liberation Sans" font-weight="bold" font-size="10" text-anchor="middle" fill="#111">?</text></svg>
<svg style="left:1046px;top:940px" width="17" height="17" viewBox="0 0 17 17"><circle cx="8.5" cy="8.5" r="7" fill="#1a5ac8"/><circle cx="8.5" cy="4.2" r="1.4" fill="#fff"/><path d="M3.5 6.5 L13.5 6.5 M8.5 6 L8.5 10 L6 14 M8.5 10 L11 14" stroke="#fff" stroke-width="1.6" fill="none"/></svg>
<svg style="left:1051px;top:982px" width="11" height="7" viewBox="0 0 11 7"><path d="M1 6.5 L5.5 1 L10 6.5Z" fill="none" stroke="#000" stroke-width="1.2"/></svg>



<!-- ================= RIGHT PANELS ================= -->
<div style="left:1072px;top:44px;width:208px;height:948px;background:#ebebeb"></div>
<div style="left:1072px;top:44px;width:208px;height:1px;background:#6a6a80"></div>
<div class="hdr" style="left:1072px;top:45px;width:208px;height:19px"></div>
<div style="left:1077px;top:49px;width:4px;height:11px;background:repeating-linear-gradient(#50506a 0 1px,transparent 1px 2px);-webkit-mask:linear-gradient(90deg,#000 0 1px,transparent 1px 2px,#000 2px 3px,transparent 3px)"></div>
<svg style="left:1086px;top:51px" width="10" height="6" viewBox="0 0 10 7"><path d="M0 0 L10 0 L5 7Z" fill="#000"/></svg>
<div class="t" style="left:1099px;top:49px;font-size:11px">Color</div>
<svg style="left:1262px;top:47px" width="15" height="13" viewBox="0 0 15 13"><rect x="1" y="1" width="2" height="2" fill="#111"/><rect x="1" y="5" width="2" height="2" fill="#111"/><rect x="1" y="9" width="2" height="2" fill="#111"/><rect x="5" y="1.5" width="7" height="1" fill="#111"/><rect x="5" y="5.5" width="7" height="1" fill="#111"/><rect x="5" y="9.5" width="4" height="1" fill="#111"/><path d="M10 10 L14 10 L12 12.5Z" fill="#111"/></svg>
<div style="left:1072px;top:64px;width:208px;height:19px;background:#8584a4"></div>
<svg style="left:1072px;top:66px" width="76" height="17" viewBox="0 0 76 17"><path d="M0 17 L0 5 Q0 0 5 0 L64 0 Q66 0 67 2 L75 17 Z" fill="#ebebeb"/></svg>
<div class="t" style="left:1078px;top:70px;font-size:11px;letter-spacing:-.1px">Color Mixer</div>
<div class="t" style="left:1149px;top:70px;font-size:11px;color:#f2f2f8;letter-spacing:-.2px">Color Swatches</div>
<svg style="left:1082px;top:91px" width="14" height="14" viewBox="0 0 14 14"><path d="M1 11.5 L9.5 2.5 C10.5 1.5 12 1.5 12.7 2.3 C13.5 3.1 13.5 4.5 12.5 5.5 L4 14 L0.5 14.5 Z" fill="#d0d0d0" stroke="#222" stroke-width="1"/><path d="M2.5 12 L10.5 3.5" stroke="#fafafa" stroke-width="1.2"/><path d="M9 3 L12 6" stroke="#444" stroke-width=".8"/></svg>
<svg style="left:1099px;top:88px" width="22" height="19" viewBox="0 0 22 19" shape-rendering="crispEdges"><rect x="0" y="0" width="21" height="18" fill="#fff"/><rect x="21" y="1" width="1" height="18" fill="#b4b4b4"/><rect x="1" y="18" width="21" height="1" fill="#b4b4b4"/><rect x="2" y="2" width="16" height="13" fill="#000"/><rect x="12" y="11" width="7" height="5" fill="#fff"/><path d="M13 12 L19 12 L16 15Z" fill="#000" shape-rendering="auto"/></svg>
<div style="left:1076px;top:116px;width:49px;height:24px;background:#fff;border-radius:3px"></div>
<svg style="left:1083px;top:121px" width="13" height="15" viewBox="0 0 13 15"><path d="M2.5 13.5 C0.5 11 1 7 3.5 5.5" fill="none" stroke="#0a0a0a" stroke-width="2"/><path d="M3.5 6.5 L7.5 3.5 L12 8.5 L8 12 Z" fill="#b8b8b8" stroke="#111" stroke-width="1"/><path d="M5.5 7 L7.8 5.2 L10.2 8 L8 10Z" fill="#eee"/><ellipse cx="7.5" cy="2.3" rx="1.3" ry="1.8" fill="none" stroke="#111" stroke-width=".9"/></svg>
<svg style="left:1099px;top:119px" width="22" height="19" viewBox="0 0 22 19" shape-rendering="crispEdges"><rect x="0" y="0" width="21" height="18" fill="#fff"/><rect x="21" y="1" width="1" height="18" fill="#b4b4b4"/><rect x="1" y="18" width="21" height="1" fill="#b4b4b4"/><rect x="2" y="2" width="16" height="13" fill="#cccccc"/><rect x="12" y="11" width="7" height="5" fill="#fff"/><path d="M13 12 L19 12 L16 15Z" fill="#000" shape-rendering="auto"/></svg>
<svg style="left:1078px;top:147px" width="11" height="12" viewBox="0 0 11 12" shape-rendering="crispEdges"><rect x="3" y="4" width="8" height="8" fill="#000"/><rect x="4" y="5" width="6" height="6" fill="#fff"/><rect x="0" y="0" width="8" height="8" fill="#111"/></svg>
<svg style="left:1095px;top:147px" width="11" height="12" viewBox="0 0 11 12"><rect x="0.5" y="0.5" width="10" height="11" fill="#fff" stroke="#000" stroke-width="1" shape-rendering="crispEdges"/><path d="M1.2 11 L9.8 1" stroke="#e00000" stroke-width="1.8"/></svg>
<svg style="left:1110px;top:147px" width="14" height="12" viewBox="0 0 14 12"><rect x="0" y="0" width="5" height="5" fill="#111" shape-rendering="crispEdges"/><rect x="0.5" y="6.5" width="5" height="5" fill="#fff" stroke="#000" stroke-width="1" shape-rendering="crispEdges"/><path d="M7 2.5 L10 2.5 C12.5 2.5 13 4.5 13 6 C13 8 12 9.5 10 9.5 L7.5 9.5" fill="none" stroke="#1a7090" stroke-width="1.8"/><path d="M8.5 0.5 L6.5 2.5 L8.5 4.5 M9 7.5 L7 9.5 L9 11.5" fill="none" stroke="#1a7090" stroke-width="1.3"/></svg>
<div class="t" style="left:1173px;top:91px;font-size:11px">Type:</div>
<div style="left:1204px;top:87px;width:69px;height:20px;border:1px solid #333;border-radius:2px;background:#ebebeb"></div>
<div class="t" style="left:1208px;top:91px;font-size:11px">Solid</div>
<svg style="left:1261px;top:95px" width="8" height="5" viewBox="0 0 8 5"><path d="M0 0 L8 0 L4 5Z" fill="#000020"/></svg>
<div class="t" style="left:1102px;top:174px;font-size:11px">R:</div>
<div class="t" style="left:1102px;top:195px;font-size:11px">G:</div>
<div class="t" style="left:1103px;top:216px;font-size:11px">B:</div>
<div class="t" style="left:1082px;top:238px;font-size:11px">Alpha:</div>
<div class="fld" style="left:1117px;top:169px;width:42px;height:20px"></div>
<div class="fld" style="left:1117px;top:190px;width:42px;height:20px"></div>
<div class="fld" style="left:1117px;top:211px;width:42px;height:20px"></div>
<div class="fld" style="left:1117px;top:233px;width:42px;height:20px"></div>
<div class="t" style="left:1122px;top:174px;font-size:11px">204</div>
<div class="t" style="left:1122px;top:195px;font-size:11px">204</div>
<div class="t" style="left:1122px;top:216px;font-size:11px">204</div>
<div class="t" style="left:1122px;top:238px;font-size:11px">100%</div>
<svg style="left:1161px;top:177px" width="8" height="5" viewBox="0 0 8 5"><path d="M0 0 L8 0 L4 5Z" fill="#000020"/></svg>
<svg style="left:1161px;top:198px" width="8" height="5" viewBox="0 0 8 5"><path d="M0 0 L8 0 L4 5Z" fill="#000020"/></svg>
<svg style="left:1161px;top:219px" width="8" height="5" viewBox="0 0 8 5"><path d="M0 0 L8 0 L4 5Z" fill="#000020"/></svg>
<svg style="left:1161px;top:241px" width="8" height="5" viewBox="0 0 8 5"><path d="M0 0 L8 0 L4 5Z" fill="#000020"/></svg>
<div style="left:1184px;top:167px;width:60px;height:61px;background:linear-gradient(90deg,#ff0000,#ffff00 17%,#00ff00 33%,#00ffff 50%,#0000ff 67%,#ff00ff 83%,#ff0044)"></div>
<div style="left:1184px;top:167px;width:60px;height:61px;background:linear-gradient(rgba(80,80,80,0),rgba(80,80,80,1))"></div>
<div style="left:1250px;top:167px;width:18px;height:61px;background:linear-gradient(#fff 0,#f8f8f8 10%,#999 50%,#000 100%)"></div>
<svg style="left:1270px;top:175px" width="6" height="10" viewBox="0 0 6 10"><path d="M6 0 L6 10 L0 5Z" fill="#000"/></svg>
<div class="fld" style="left:1182px;top:231px;width:63px;height:23px"></div>
<div class="t" style="left:1188px;top:236px;font-size:11px;letter-spacing:-.2px">#CCCCCC</div>
<div style="left:1075px;top:285px;width:200px;height:41px;background:#cccccc;border:1px solid #b0b0b0;border-bottom-color:#f4f4f4;border-right-color:#f4f4f4"></div>
<div style="left:1072px;top:337px;width:208px;height:1px;background:#5a5a70"></div>
<div class="hdr" style="left:1072px;top:338px;width:208px;height:19px"></div>
<div style="left:1077px;top:342px;width:4px;height:11px;background:repeating-linear-gradient(#50506a 0 1px,transparent 1px 2px);-webkit-mask:linear-gradient(90deg,#000 0 1px,transparent 1px 2px,#000 2px 3px,transparent 3px)"></div>
<svg style="left:1086px;top:345px" width="10" height="6" viewBox="0 0 10 7"><path d="M0 0 L10 0 L5 7Z" fill="#000"/></svg>
<div class="t" style="left:1098px;top:342px;font-size:11px;letter-spacing:-.1px">Library - Untitled-2</div>
<svg style="left:1262px;top:341px" width="15" height="13" viewBox="0 0 15 13"><rect x="1" y="1" width="2" height="2" fill="#111"/><rect x="1" y="5" width="2" height="2" fill="#111"/><rect x="1" y="9" width="2" height="2" fill="#111"/><rect x="5" y="1.5" width="7" height="1" fill="#111"/><rect x="5" y="5.5" width="7" height="1" fill="#111"/><rect x="5" y="9.5" width="4" height="1" fill="#111"/><path d="M10 10 L14 10 L12 12.5Z" fill="#111"/></svg>
<div style="left:1077px;top:362px;width:148px;height:20px;border:1px solid #333;border-radius:2px;background:#ebebeb"></div>
<div class="t" style="left:1080px;top:366px;font-size:11px">Untitled-2</div>
<svg style="left:1212px;top:370px" width="8" height="5" viewBox="0 0 8 5"><path d="M0 0 L8 0 L4 5Z" fill="#000020"/></svg>
<svg style="left:1231px;top:365px" width="16" height="13" viewBox="0 0 16 13"><path d="M1 6.3 L6 6.3 M1 8.3 L6 8.3" stroke="#444" stroke-width=".9"/><path d="M6 1.5 L8 1.5 L9 4 L12.5 4 L12.5 11 L9 11 L6 11.5 Z" fill="#f4f4f4" stroke="#333" stroke-width="1"/><path d="M9 4 L9 11" stroke="#555" stroke-width=".9"/><rect x="9.8" y="5.5" width="2" height="3" fill="#666"/></svg>
<svg style="left:1258px;top:365px" width="16" height="13" viewBox="0 0 16 13"><rect x="1.5" y="1.5" width="7.5" height="8.5" fill="#c8ecf8" stroke="#5a7a90" stroke-width="1"/><rect x="7.5" y="3.5" width="7.5" height="8.5" fill="#dce4ff" stroke="#111" stroke-width="1.1"/><path d="M4.5 7.5 L13 7.5 M10.5 5.5 L13 7.5 L10.5 9.5" fill="none" stroke="#1a2ae0" stroke-width="1.4"/></svg>
<div style="left:1072px;top:386px;width:208px;height:2px;background:linear-gradient(#c8c8c8 1px,#fafafa 1px)"></div>
<div class="t" style="left:1076px;top:391px;font-size:11px">Empty library</div>
<div style="left:1073px;top:406px;width:206px;height:88px;background:#c0c0c0;border-top:2px solid #4a4a4a;border-left:1px solid #6a6a6a"></div>
<div style="left:1072px;top:498px;width:208px;height:1px;background:#fff"></div>
<div style="left:1073px;top:500px;width:191px;height:16px;background:#e6e6e6;border-bottom:1px solid #111;border-top:1px solid #bdbdbd"></div>
<div class="t" style="left:1075px;top:503px;font-size:11px">Name</div>
<div style="left:1221px;top:500px;width:1px;height:15px;background:#111"></div>
<div class="t" style="left:1225px;top:503px;font-size:11px">Type</div>

<div style="left:1073px;top:516px;width:192px;height:458px;background:#fff"></div>
<div style="left:1264px;top:516px;width:16px;height:458px;background:linear-gradient(90deg,#e4e4e4,#f2f2f2 50%,#e8e8e8)"></div><div style="left:1264px;top:500px;width:16px;height:16px;background:#ececec;border-bottom:1px solid #9a9a9a"></div><svg style="left:1266px;top:503px" width="10" height="9" viewBox="0 0 10 9"><path d="M5 0 L5 1 M3 3 L7 3 M1.5 5.5 L8.5 5.5 M0.5 8 L9.5 8" stroke="#111" stroke-width="1"/></svg>
<div style="left:1267px;top:519px;width:10px;height:10px;border:1px solid #000;border-top:2px solid #000;background:linear-gradient(#999 0 1px,#fff 1px)"></div>
<div style="left:1264px;top:531px;width:16px;height:1px;background:#9a9a9a"></div>
<div style="left:1271px;top:535px;width:6px;height:9px;border:1px solid #9a9a9a;border-top-width:2px"></div>
<div style="left:1264px;top:547px;width:16px;height:1px;background:#9a9a9a"></div>
<svg style="left:1268px;top:554px" width="8" height="5" viewBox="0 0 8 5"><path d="M0 5 L8 5 L4 0Z" fill="#9a9a9a"/></svg>
<svg style="left:1267px;top:963px" width="9" height="5" viewBox="0 0 9 5"><path d="M0 0 L9 0 L4.5 5Z" fill="#8a8a8a"/></svg>
<div style="left:1072px;top:974px;width:80px;height:17px;background:#ebebeb"></div>
<svg style="left:1073px;top:975px" width="14" height="14" viewBox="0 0 14 14"><path d="M4 1 L10 1 L13 4 L13 13 L4 13Z" fill="#fff" stroke="#111" stroke-width="1"/><path d="M1 8 L7 8 M4 5 L4 11" stroke="#2020c0" stroke-width="2"/></svg>
<svg style="left:1089px;top:975px" width="16" height="14" viewBox="0 0 16 14"><path d="M4 2 L9 2 L10 4 L15 4 L15 13 L4 13Z" fill="#f0dc90" stroke="#222" stroke-width="1"/><path d="M1 8 L7 8 M4 5 L4 11" stroke="#2020c0" stroke-width="2"/></svg>
<svg style="left:1106px;top:976px" width="12" height="12" viewBox="0 0 12 12"><circle cx="6" cy="6" r="5" fill="#c8c8c8" stroke="#a8a8a8"/><circle cx="6" cy="6" r="2" fill="#eee"/></svg>
<svg style="left:1138px;top:976px" width="13" height="13" viewBox="0 0 14 14"><rect x="1" y="2" width="12" height="2" fill="#ccc" stroke="#aaa" stroke-width=".6"/><path d="M2.5 4 L3.5 13 L10.5 13 L11.5 4 Z" fill="#ddd" stroke="#aaa" stroke-width=".8"/><path d="M5 5 L5.5 12 M7 5 L7 12 M9 5 L8.5 12" stroke="#aaa" stroke-width=".7"/></svg>
<div style="left:1152px;top:974px;width:113px;height:17px;background:linear-gradient(#e2e2e2,#f4f4f4 70%,#fafafa)"></div>
<svg style="left:1157px;top:978px" width="5" height="9" viewBox="0 0 5 9"><path d="M5 0 L5 9 L0 4.5Z" fill="#2e5a92"/></svg>
<div style="left:1171px;top:975px;width:25px;height:14px;border:1px solid #bcbcbc;border-radius:3px;background:#f0f0f0"></div>
<svg style="left:1255px;top:978px" width="5" height="9" viewBox="0 0 5 9"><path d="M0 0 L0 9 L5 4.5Z" fill="#2e5a92"/></svg>
<div style="left:1265px;top:974px;width:15px;height:17px;background:#fff"></div>

<!-- divider between doc and right panel -->
<div style="left:1065px;top:44px;width:7px;height:449px;background:linear-gradient(#5e5e5e,#6a6a6a)"></div>
<div style="left:1065px;top:493px;width:7px;height:48px;background:#a4a4a4"></div>
<svg style="left:1066px;top:512px" width="5" height="8" viewBox="0 0 5 8"><path d="M0 0 L5 4 L0 8Z" fill="#fff"/></svg>
<div style="left:1065px;top:541px;width:7px;height:451px;background:linear-gradient(#747474,#8a8a8a)"></div>


<!-- ================= TASKBAR ================= -->
<div style="left:0;top:992px;width:1280px;height:1px;background:#a4a4a4"></div>
<div style="left:0;top:993px;width:1280px;height:1px;background:#fff"></div>
<div style="left:0;top:994px;width:1280px;height:1px;background:#000"></div>
<div style="left:0;top:995px;width:1280px;height:29px;background:linear-gradient(#7a7a7a 0,#4c4c4c 1px,#444 4px,#2e2e2e 8px,#1c1c1c 12px,#141414 14px,#000 15px,#000 100%)"></div>
<svg style="left:21px;top:993px" width="40" height="31" viewBox="0 0 40 31"><defs><radialGradient id="orb" cx=".5" cy=".75" r=".7"><stop offset="0" stop-color="#3a9ae8"/><stop offset=".45" stop-color="#14408a"/><stop offset="1" stop-color="#06142e"/></radialGradient><linearGradient id="orbhl" x1="0" y1="0" x2="0" y2="1"><stop offset="0" stop-color="#c8e0ff" stop-opacity=".8"/><stop offset=".5" stop-color="#6a9ad8" stop-opacity=".1"/></linearGradient></defs><circle cx="20" cy="19" r="17.5" fill="url(#orb)" stroke="#02060e" stroke-width="1"/><circle cx="20" cy="19" r="16" fill="none" stroke="url(#orbhl)" stroke-width="1.2"/><path d="M11 8 C14 6.5 17 6.5 21 7.5 L20 15 C16.5 14 13.5 14 10 15.5 Z" fill="#f04818"/><path d="M22 8 C25 9 28 9.5 32 8.5 L30.5 17 C27 18 24.5 17.5 21 16 Z" fill="#78c020"/><path d="M10 16.5 C13.5 15 16.5 15 19.8 16 L18.8 24 C15.5 23 12.5 23 9 24.5 Z" fill="#2890f0"/><path d="M21 17 C24.5 18.5 27 19 30.3 18 L29 26.5 C25.5 27.5 22.5 27 19.8 25 Z" fill="#f8b818"/></svg>
<svg style="left:90px;top:1001px" width="18" height="16" viewBox="0 0 18 16"><rect x="4" y="1" width="13" height="10" fill="#dde" stroke="#889"/><rect x="6" y="2.5" width="9" height="7" fill="#1a3ad8"/><rect x="8" y="12" width="5" height="2" fill="#bbb"/><rect x="1" y="6" width="3" height="9" fill="#ccc" stroke="#888" stroke-width=".5"/></svg>
<svg style="left:114px;top:1000px" width="16" height="17" viewBox="0 0 16 17"><rect x="1" y="1" width="6" height="15" fill="#7ab8a8" stroke="#4a8a7a" stroke-width=".6"/><rect x="6" y="2" width="9" height="14" fill="#eef" stroke="#99a" stroke-width=".6"/><rect x="8" y="5" width="5" height="1" fill="#48f"/><rect x="8" y="8" width="5" height="1" fill="#48f"/></svg>
<svg style="left:136px;top:1000px" width="17" height="17" viewBox="0 0 17 17"><circle cx="8.5" cy="8.5" r="7.5" fill="#3a90d8" stroke="#1a4a80" stroke-width=".6"/><path d="M12 4 C7 2 4 6 7.5 8.5 C11 11 8 15 4 13" fill="none" stroke="#fff" stroke-width="1.8"/></svg>
<svg style="left:164px;top:1001px" width="10" height="6" viewBox="0 0 10 6"><path d="M1 0.5 L4 3 L1 5.5 M5.5 0.5 L8.5 3 L5.5 5.5" fill="none" stroke="#22226a" stroke-width="1.6"/></svg>
<div style="left:182px;top:996px;width:156px;height:26px;border:1px solid #555;border-radius:3px;background:linear-gradient(#3a3a3a 0,#1a1a1a 45%,#050505 55%,#000 100%)"></div>
<svg style="left:192px;top:1001px" width="14" height="17" viewBox="0 0 14 17"><ellipse cx="7" cy="8.5" rx="4.5" ry="6.8" fill="none" stroke="#c81818" stroke-width="3.2"/><ellipse cx="7" cy="8.5" rx="1.5" ry="5" fill="none" stroke="#f8a0a0" stroke-width=".8" opacity=".7"/></svg>
<div class="t" style="left:209px;top:1004px;font-size:11px;color:#f0f0f0">Форум вФОСе.ру • ...</div>
<div style="left:342px;top:996px;width:156px;height:26px;border:1px solid #555;border-radius:3px;background:linear-gradient(#3a3a3a 0,#1a1a1a 45%,#050505 55%,#000 100%)"></div>
<svg style="left:351px;top:1001px" width="17" height="17" viewBox="0 0 17 17"><circle cx="8.5" cy="8.5" r="8" fill="#d8261c"/><path d="M4 13 C6 13 7 11 8 8 L9 5.5 C9.6 4 10.5 3.6 12.5 3.6 M6.5 8 L11 8" stroke="#fff" stroke-width="1.8" fill="none"/></svg>
<div class="t" style="left:370px;top:1004px;font-size:11px;color:#f0f0f0">Macromedia Flash Pro...</div>
<svg style="left:1147px;top:1003px" width="9" height="11" viewBox="0 0 9 11"><path d="M7.5 1 L2 5.5 L7.5 10" fill="none" stroke="#c8c8d8" stroke-width="2"/></svg>
<svg style="left:1161px;top:1000px" width="17" height="17" viewBox="0 0 17 17"><g fill="#58c020" stroke="#2a7a10" stroke-width=".5"><circle cx="8.5" cy="3.5" r="3"/><circle cx="13" cy="6.5" r="3"/><circle cx="12" cy="12" r="3"/><circle cx="5" cy="12" r="3"/><circle cx="4" cy="6.5" r="3"/></g><circle cx="8.5" cy="8.5" r="1.6" fill="#f0e020"/></svg>
<svg style="left:1180px;top:1000px" width="17" height="17" viewBox="0 0 17 17"><rect x="7" y="1" width="9" height="8" fill="#888" stroke="#aaa" stroke-width=".5"/><rect x="1" y="5" width="10" height="8" fill="#1a40d0" stroke="#889" stroke-width=".6"/><rect x="3" y="14" width="6" height="1.5" fill="#889"/></svg>
<svg style="left:1198px;top:1000px" width="17" height="17" viewBox="0 0 17 17"><rect x="7" y="1" width="9" height="8" fill="#888" stroke="#aaa" stroke-width=".5"/><rect x="1" y="5" width="10" height="8" fill="#1a40d0" stroke="#889" stroke-width=".6"/><rect x="3" y="14" width="6" height="1.5" fill="#889"/></svg>
<svg style="left:1216px;top:1003px" width="15" height="12" viewBox="0 0 15 12"><rect x="0" y="0" width="15" height="12" fill="#e8e8f0"/><rect x="0" y="1" width="15" height="1.5" fill="#d04040"/><rect x="0" y="4.5" width="15" height="1.5" fill="#d04040"/><rect x="0" y="8" width="15" height="1.5" fill="#d04040"/><rect x="0" y="0" width="6" height="6" fill="#4a5ab0"/></svg>
<div class="t" style="left:1239px;top:1003px;font-size:11px;color:#fff">11:05</div>


</body></html>
